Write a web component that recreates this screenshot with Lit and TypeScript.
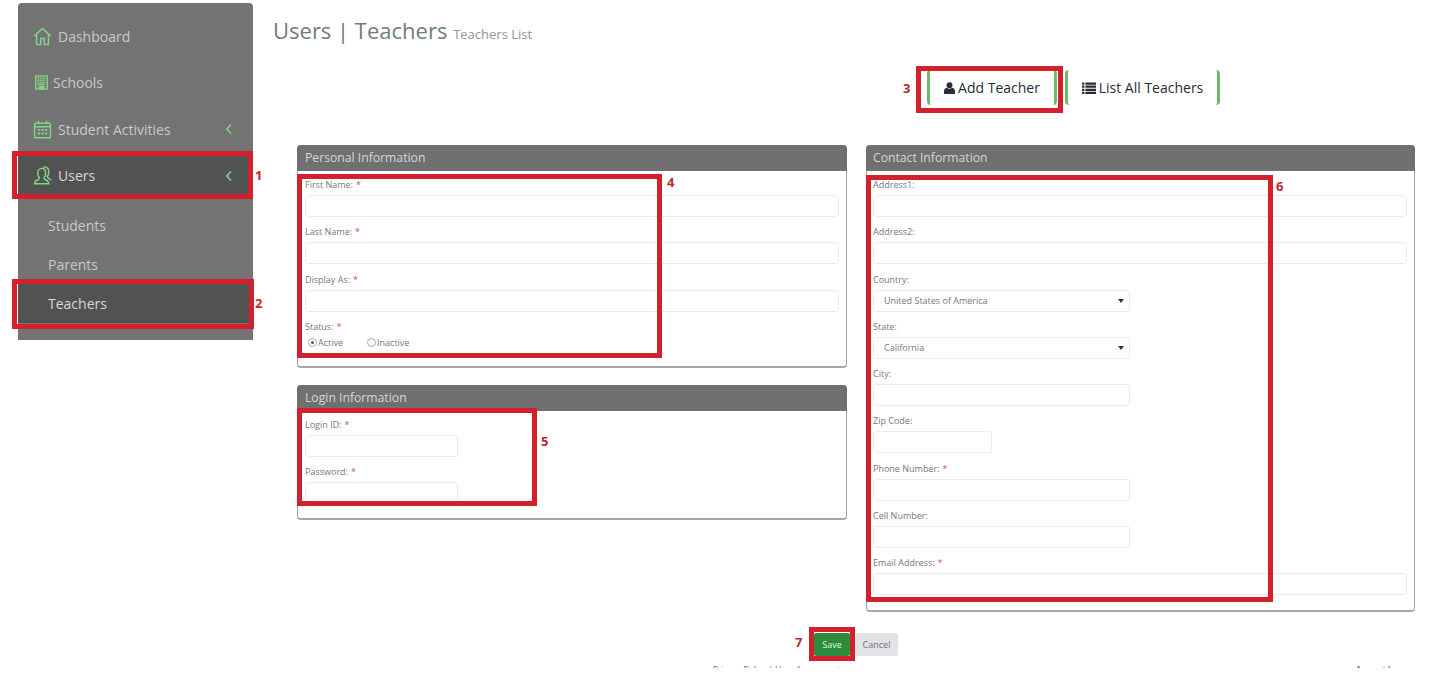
import { LitElement, html, css, svg } from "lit";
import { customElement } from "lit/decorators.js";

const G = "#84d484";
const icon = (cls: string, body: unknown, vb = "0 0 24 24") => html`<svg class=${cls} viewBox=${vb} fill="none" stroke=${G} stroke-width="1.800">${body}</svg>`;

const homeIcon = icon("ic home", svg`<path d="M1.500 11.500 12 2l10.500 9.500M4.500 9.500V22h5.200v-7.500h4.600V22h5.200V9.500"/>`);
const schoolIcon = icon("ic school", svg`<rect x="2.500" y="1.500" width="19" height="21" fill="${G}" fill-opacity=".25"/><path d="M6 5h12M6 8.500h12M6 12h12M6 15h12" stroke-width="2" stroke-dasharray="2 1"/><rect x="8.500" y="18" width="7" height="4.500" fill="${G}"/>`);
const calIcon = icon("ic cal", svg`<rect x="2" y="4" width="20" height="18.500" rx="1"/><path d="M2 8.500h20M7 1v4.500M17 1v4.500"/><path d="M6 12.500h3M10.500 12.500h3M15 12.500h3M6 17h3M10.500 17h3M15 17h3" stroke-width="2.400"/>`);
const usersIcon = icon("ic users", svg`<path d="M2 22.500c0-3.500 2-4.500 5-5.500 1-.5 1.300-1.500.8-2.500C6.500 12.800 6 11 6 9c0-3.500 2-6 5-6s5 2.500 5 6c0 2-.5 3.800-1.800 5.500-.5 1-.2 2 .8 2.500 3 1 5 2 5 5.500z"/><path d="M12.500 1.500c3-1 7-.2 7.500 5 .2 2.500-.5 5-2 7 0 1.500 3 2.500 5 4.500"/>`);
const chev = html`<svg class="chev" viewBox="0 0 8 12" fill="none" stroke=${G} stroke-width="1.600"><path d="M6 1.500 1.800 6 6 10.500"/></svg>`;
const userGlyph = html`<svg class="glyph" viewBox="0 0 12 13" fill="#2b2b3a"><circle cx="6" cy="3.400" r="3.200"/><path d="M0 13V10c0-2.400 1.500-3.800 3.300-3.800C4 6.900 5 7.200 6 7.200s2-.3 2.700-1C10.500 6.200 12 7.600 12 10v3z"/></svg>`;
const listGlyph = html`<svg class="glyph wide" viewBox="0 0 14 12" fill="#2b2b3a"><path d="M0 .5h2.400v2.200H0zM3.400.5H14v2.200H3.400zM0 3.600h2.400v2.200H0zM3.400 3.600H14v2.200H3.400zM0 6.700h2.400v2.200H0zM3.400 6.700H14v2.200H3.400zM0 9.800h2.400V12H0zM3.400 9.800H14V12H3.400z"/></svg>`;

@customElement("app-root")
export class AppRoot extends LitElement {
  static styles = css`
    :host { display: block; position: relative; width: 1452px; height: 688px; overflow: hidden; background: #fff; font-family: "Open Sans", "Noto Sans", sans-serif; }
    .page { display: flex; align-items: flex-start; height: 668px; overflow: hidden; padding-left: 18px; box-sizing: border-box; }

    .side { flex: none; width: 235px; height: 337px; margin-top: 3px; background: #737373; border-radius: 4px 4px 0 0; padding-top: 10px; box-sizing: border-box; display: flex; flex-direction: column; color: #c9c9c9; font-size: 14px; }
    .item { height: 46.500px; display: flex; align-items: center; padding-left: 15px; flex: none; }
    .item.active { background: #525252; color: #d8d8d8; }
    .item .label { margin-left: 6px; }
    .item.tight .label { margin-left: 4px; }
    .chev { width: 8px; height: 12px; margin-left: auto; margin-right: 20px; }
    .ic { width: 19px; height: 19px; flex: none; }
    .ic.school { width: 15px; height: 19px; margin-left: 1px; }
    .sub { height: 39px; flex: none; display: flex; align-items: center; padding-left: 30px; }
    .subs { padding-top: 7px; display: flex; flex-direction: column; }
    .sub.active { background: #525252; color: #d8d8d8; }

    .main { flex: none; width: 1179px; margin-left: 20px; display: flex; flex-direction: column; }
    .title { height: 63px; padding-top: 16px; box-sizing: border-box; font-size: 22px; line-height: 28px; color: #6d7c86; }
    .title small { font-size: 13px; color: #8a969d; }
    .tabs { display: flex; margin-left: 654px; gap: 8px; height: 35px; margin-top: 7px; }
    .tab { height: 35px; display: flex; align-items: center; justify-content: center; gap: 3px; border-left: 3px solid #6dbb6a; border-right: 3px solid #6dbb6a; border-radius: 4px; box-sizing: border-box; font-size: 14px; color: #2b2b3a; }
    .tab.add { width: 130px; }
    .tab.list { width: 155px; }
    .glyph { width: 11px; height: 12px; }
    .glyph.wide { width: 14px; }

    .columns { display: flex; gap: 19px; margin-left: 24px; margin-top: 40px; align-items: flex-start; }
    .col { width: 550px; display: flex; flex-direction: column; gap: 17px; }
    .col.right { width: 549px; }
    .panel { border: 1px solid #a6a6a6; border-bottom-width: 2px; border-top: 0; border-radius: 4px; box-sizing: border-box; }
    .panel header { height: 26px; background: #707070; color: #d6d6d6; font-size: 12.200px; line-height: 26px; padding-left: 8px; border-radius: 4px 4px 0 0; margin: 0 -1px; }
    .right .panel header { padding-left: 7px; }
    .panel .body { padding: 6px 7px 0; }
    .right .panel .body { padding-left: 6px; }
    .personal { height: 223px; }
    .login { height: 135px; }
    .contact { height: 467px; }
    .field { height: 47.250px; }
    .lbl { display: block; height: 18px; font-size: 9px; line-height: 16px; color: #777; }
    .req { color: #d9534f; margin-left: 3px; }
    .input { height: 22px; box-sizing: border-box; border: 1px solid #ebebeb; border-radius: 3px; background: #fff; display: flex; align-items: center; justify-content: space-between; padding: 0 5px 0 10px; font-size: 9px; color: #777; }
    .select, .mid { width: 257px; }
    .short { width: 119px; }
    .small { width: 153px; }
    .caret { width: 0; height: 0; border: 3px solid transparent; border-top: 4px solid #333; border-bottom: 0; }
    .radios { display: flex; font-size: 9px; color: #777; margin-top: -1px; padding-left: 3px; align-items: center; height: 14px; }
    .radio { display: inline-block; width: 9px; height: 9px; border: 1px solid #aaa; border-radius: 50%; box-sizing: border-box; position: relative; margin-right: 1px; }
    .radio.on::after { content: ""; position: absolute; left: 2px; top: 2px; width: 3px; height: 3px; border-radius: 50%; background: #555; }
    .radios .gap { margin-left: 24px; }

    .actions { display: flex; margin-left: 541px; margin-top: 21px; gap: 5px; }
    .btn { height: 23px; border-radius: 2px; font-size: 9px; display: flex; align-items: center; justify-content: center; }
    .save { width: 36px; background: #2d8c3c; color: #e6f2e6; }
    .cancel { width: 43px; background: #e2e3e6; color: #6f747a; }
    .foot { display: flex; font-size: 8.500px; color: #777; margin-top: 7px; line-height: 13px; height: 13px; }
    .foot .policy { margin-left: 440px; }
    .foot .extra { margin-left: auto; margin-right: 37px; font-size: 16px; margin-top: -2px; line-height: 22px; }

    .mark { position: absolute; box-sizing: border-box; border: 5px solid #d2202c; pointer-events: none; }
    .m1 { left: 12px; top: 151px; width: 241px; height: 48px; }
    .m2 { left: 12px; top: 279px; width: 242px; height: 50px; }
    .m3 { left: 916px; top: 66px; width: 147px; height: 47px; }
    .m4 { left: 297px; top: 174px; width: 365px; height: 184px; }
    .m5 { left: 297px; top: 408px; width: 240px; height: 98px; }
    .m6 { left: 866px; top: 175px; width: 407px; height: 427px; }
    .m7 { left: 809px; top: 627px; width: 46px; height: 34px; }
    .num { position: absolute; font-size: 13px; font-weight: 700; line-height: 16px; color: #c0272d; }
    .n1 { left: 255px; top: 167px; }
    .n2 { left: 255px; top: 295px; }
    .n3 { left: 903px; top: 80px; }
    .n4 { left: 667px; top: 174px; }
    .n5 { left: 541px; top: 433px; }
    .n6 { left: 1276px; top: 178px; }
    .n7 { left: 795px; top: 634px; }
  `;

  private field(label: string, req = false, cls = "", value = "", caret = false) {
    return html`<div class="field">
      <label class="lbl">${label}${req ? html`<span class="req">*</span>` : ""}</label>
      <div class="input ${cls}">${value}${caret ? html`<span class="caret"></span>` : ""}</div>
    </div>`;
  }

  render() {
    return html`
      <div class="page">
        <nav class="side">
          <div class="item">${homeIcon}<span class="label">Dashboard</span></div>
          <div class="item tight">${schoolIcon}<span class="label">Schools</span></div>
          <div class="item">${calIcon}<span class="label">Student Activities</span>${chev}</div>
          <div class="item active">${usersIcon}<span class="label">Users</span>${chev}</div>
          <div class="subs">
            <div class="sub">Students</div>
            <div class="sub">Parents</div>
            <div class="sub active">Teachers</div>
          </div>
        </nav>
        <main class="main">
          <div class="title">Users | Teachers <small>Teachers List</small></div>
          <div class="tabs">
            <div class="tab add">${userGlyph}Add Teacher</div>
            <div class="tab list">${listGlyph}List All Teachers</div>
          </div>
          <div class="columns">
            <div class="col">
              <section class="panel personal">
                <header>Personal Information</header>
                <div class="body">
                  ${this.field("First Name:", true)}
                  ${this.field("Last Name:", true)}
                  ${this.field("Display As:", true)}
                  <label class="lbl">Status:<span class="req">*</span></label>
                  <div class="radios"><span class="radio on"></span>Active<span class="radio gap"></span>Inactive</div>
                </div>
              </section>
              <section class="panel login">
                <header>Login Information</header>
                <div class="body">
                  ${this.field("Login ID:", true, "small")}
                  ${this.field("Password:", true, "small")}
                </div>
              </section>
            </div>
            <div class="col right">
              <section class="panel contact">
                <header>Contact Information</header>
                <div class="body">
                  ${this.field("Address1:")}
                  ${this.field("Address2:")}
                  ${this.field("Country:", false, "select", "United States of America", true)}
                  ${this.field("State:", false, "select", "California", true)}
                  ${this.field("City:", false, "mid")}
                  ${this.field("Zip Code:", false, "short")}
                  ${this.field("Phone Number:", true, "mid")}
                  ${this.field("Cell Number:", false, "mid")}
                  ${this.field("Email Address:", true)}
                </div>
              </section>
            </div>
          </div>
          <div class="actions">
            <div class="btn save">Save</div>
            <div class="btn cancel">Cancel</div>
          </div>
          <div class="foot"><span class="policy">Privacy Policy | User Agreement</span><span class="extra">Anytime</span></div>
        </main>
      </div>
      <div class="mark m1"></div><div class="mark m2"></div><div class="mark m3"></div><div class="mark m4"></div>
      <div class="mark m5"></div><div class="mark m6"></div><div class="mark m7"></div>
      <span class="num n1">1</span><span class="num n2">2</span><span class="num n3">3</span><span class="num n4">4</span>
      <span class="num n5">5</span><span class="num n6">6</span><span class="num n7">7</span>
    `;
  }
}
